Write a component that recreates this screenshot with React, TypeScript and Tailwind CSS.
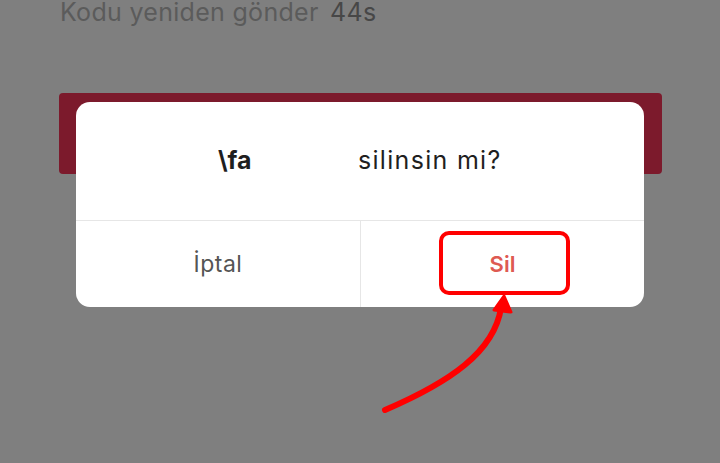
import React from 'react';

const font = { fontFamily: 'Inter, "Noto Sans", sans-serif' };

const App: React.FC = () => {
  return (
    <div className="relative w-[720px] h-[463px] overflow-hidden bg-[#7f7f7f]" style={font}>
      {/* page behind the dim */}
      <div className="pl-[60px] -mt-[4px] text-[25px] leading-[32px] tracking-[0.3px] text-[#5b5b5b]">
        Kodu yeniden gönder <span className="ml-[4px] text-[#474747]">44s</span>
      </div>
      <div className="ml-[59px] mt-[65px] w-[603px] h-[81px] rounded-[4px] bg-[#7c1a2c]" />

      {/* dialog */}
      <div className="absolute left-[76px] top-[102px] w-[568px] h-[205px] rounded-[14px] bg-white flex flex-col overflow-hidden">
        <div className="h-[118px] flex items-center text-[25px] tracking-[1.3px] text-[#1f1f1f]">
          <span className="ml-[142px] w-[35px] overflow-hidden whitespace-nowrap font-bold tracking-normal">\fa</span>
          <span className="ml-[105px]">silinsin mi?</span>
        </div>
        <div className="flex-1 grid grid-cols-2 border-t border-[#e6e6e6]">
          <div className="flex items-center justify-center text-[23px] tracking-[0.5px] text-[#555]">İptal</div>
          <div className="flex items-center justify-center border-l border-[#e6e6e6] text-[22px] font-semibold text-[#de5a52]">
            Sil
          </div>
        </div>
      </div>

      {/* annotation */}
      <div className="absolute left-[439px] top-[231px] w-[131px] h-[64px] rounded-[10px] border-[4px] border-[#ff0000]" />
      <svg className="absolute left-0 top-0" width="720" height="463" viewBox="0 0 720 463">
        <path d="M385 410 C 450 382, 494 352, 501 308" fill="none" stroke="#ff0000" strokeWidth="6" strokeLinecap="round" />
        <path d="M504 296 L511 312 L494 310 Z" fill="#ff0000" stroke="#ff0000" strokeWidth="3" strokeLinejoin="round" />
      </svg>
    </div>
  );
};

export default App;
